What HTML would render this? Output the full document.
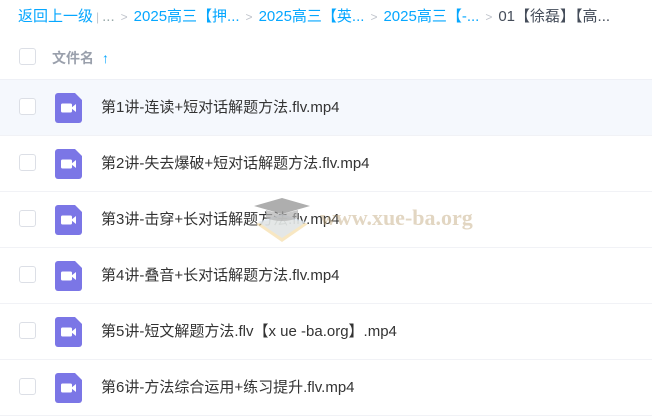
<!DOCTYPE html>
<html><head><meta charset="utf-8"><style>
body{margin:0;width:652px;height:417px;overflow:hidden;background:#fff;font-family:"Liberation Sans","Noto Sans CJK SC",sans-serif;position:relative}
.bc{position:absolute;top:7px;left:18px;font-size:15px;color:#06a7ff;white-space:nowrap;line-height:20px}
.bc .g{color:#c0c4cc;font-size:12px;margin:0 6px}
.bc .cur{color:#454d5a}
.hd{position:absolute;top:45px;left:0;right:0;height:34px;border-bottom:1px solid #eef0f6}
.cb{position:absolute;left:19px;width:15px;height:15px;border:1px solid #dcdfe6;border-radius:3px;background:#fff}
.hd .cb{top:3px}
.hd .t{position:absolute;left:52px;top:3px;font-size:14px;color:#9aa0ac;font-weight:bold}
.hd .t b{color:#06a7ff;margin-left:8px}
.row{position:absolute;left:0;right:0;height:55px;border-bottom:1px solid #f1f2f6}
.row .cb{top:18px}
.row .ic{position:absolute;left:55px;top:13px;width:27px;height:30px}
.row .n{position:absolute;left:101px;top:16px;font-size:15px;color:#333}
.wm{position:absolute;left:320px;top:205px;font-family:"Liberation Serif",serif;font-weight:bold;font-size:22px;color:rgba(190,165,120,.45)}
</style></head><body>
<div class="bc">返回上一级<span class="g" style="margin:0 3px">|</span><span style="color:#9aa">...</span><span class="g">&gt;</span>2025高三【押...<span class="g">&gt;</span>2025高三【英...<span class="g">&gt;</span>2025高三【-...<span class="g">&gt;</span><span class="cur">01【徐磊】【高...</span></div>
<div class="hd"><div class="cb"></div><div class="t">文件名<b>↑</b></div></div>
<div class="row" style="top:80px;background:#f5f8fd"><div class="cb"></div><svg class="ic" viewBox="0 0 27 30"><path d="M3 0h17l7 7v20a3 3 0 0 1-3 3H3a3 3 0 0 1-3-3V3a3 3 0 0 1 3-3z" fill="#7b76e6"/><rect x="6" y="10.5" width="11" height="9" rx="1.5" fill="#fff"/><path d="M16 15l5-4v8z" fill="#fff"/></svg><div class="n">第1讲-连读+短对话解题方法.flv.mp4</div></div>
<div class="row" style="top:136px"><div class="cb"></div><svg class="ic" viewBox="0 0 27 30"><path d="M3 0h17l7 7v20a3 3 0 0 1-3 3H3a3 3 0 0 1-3-3V3a3 3 0 0 1 3-3z" fill="#7b76e6"/><rect x="6" y="10.5" width="11" height="9" rx="1.5" fill="#fff"/><path d="M16 15l5-4v8z" fill="#fff"/></svg><div class="n">第2讲-失去爆破+短对话解题方法.flv.mp4</div></div>
<div class="row" style="top:192px"><div class="cb"></div><svg class="ic" viewBox="0 0 27 30"><path d="M3 0h17l7 7v20a3 3 0 0 1-3 3H3a3 3 0 0 1-3-3V3a3 3 0 0 1 3-3z" fill="#7b76e6"/><rect x="6" y="10.5" width="11" height="9" rx="1.5" fill="#fff"/><path d="M16 15l5-4v8z" fill="#fff"/></svg><div class="n">第3讲-击穿+长对话解题方法.flv.mp4</div></div>
<div class="row" style="top:248px"><div class="cb"></div><svg class="ic" viewBox="0 0 27 30"><path d="M3 0h17l7 7v20a3 3 0 0 1-3 3H3a3 3 0 0 1-3-3V3a3 3 0 0 1 3-3z" fill="#7b76e6"/><rect x="6" y="10.5" width="11" height="9" rx="1.5" fill="#fff"/><path d="M16 15l5-4v8z" fill="#fff"/></svg><div class="n">第4讲-叠音+长对话解题方法.flv.mp4</div></div>
<div class="row" style="top:304px"><div class="cb"></div><svg class="ic" viewBox="0 0 27 30"><path d="M3 0h17l7 7v20a3 3 0 0 1-3 3H3a3 3 0 0 1-3-3V3a3 3 0 0 1 3-3z" fill="#7b76e6"/><rect x="6" y="10.5" width="11" height="9" rx="1.5" fill="#fff"/><path d="M16 15l5-4v8z" fill="#fff"/></svg><div class="n">第5讲-短文解题方法.flv【x ue -ba.org】.mp4</div></div>
<div class="row" style="top:360px"><div class="cb"></div><svg class="ic" viewBox="0 0 27 30"><path d="M3 0h17l7 7v20a3 3 0 0 1-3 3H3a3 3 0 0 1-3-3V3a3 3 0 0 1 3-3z" fill="#7b76e6"/><rect x="6" y="10.5" width="11" height="9" rx="1.5" fill="#fff"/><path d="M16 15l5-4v8z" fill="#fff"/></svg><div class="n">第6讲-方法综合运用+练习提升.flv.mp4</div></div>
<svg style="position:absolute;left:252px;top:194px" width="62" height="52" viewBox="0 0 62 52"><path d="M4 30 L30 22 L56 30 L30 48Z" fill="#f3d79a" opacity=".6"/><path d="M6 28 L30 20 L54 28 L30 44Z" fill="#dfe7f0" opacity=".8"/><path d="M2 12 L30 4 L58 12 L30 20Z" fill="#9a9a9a" opacity=".8"/><path d="M14 16 v8 q16 6 32 0 v-8 L30 20Z" fill="#b0b0b0" opacity=".7"/></svg>
<div class="wm">www.xue-ba.org</div>
</body></html>
